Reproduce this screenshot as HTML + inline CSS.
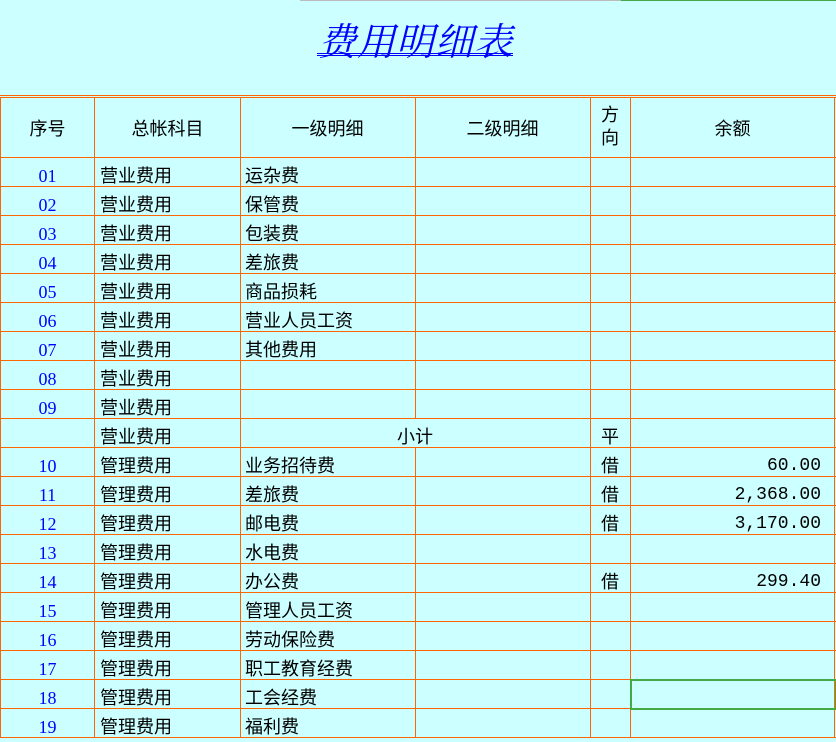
<!DOCTYPE html>
<html><head><meta charset="utf-8"><style>
body{margin:0;width:836px;height:738px;overflow:hidden;background:#ccffff;position:relative;font-family:"Liberation Sans","Noto Sans CJK SC",sans-serif;color:#000}
.t{position:absolute;left:318px;top:11px;font-size:38px;font-style:italic;color:#0000ff;white-space:nowrap;font-family:"Liberation Serif","Noto Serif CJK SC",serif;letter-spacing:1px}
.u{position:absolute;left:317px;width:196px;height:1px;background:#0000ff}
.h{position:absolute;background:#ff6600;height:1px;left:0;width:836px}
.v{position:absolute;background:#ff6600;width:1px}
.c{position:absolute;font-size:18px;line-height:29px;white-space:nowrap}
.n{color:#0000ff;font-family:"Liberation Serif",serif;text-align:center;width:95px;left:0}
.m{font-family:"Liberation Mono",monospace;text-align:right;right:15px}
</style></head><body>
<div style="position:absolute;left:300px;top:0;width:321px;height:1px;background:#bbb"></div>
<div style="position:absolute;left:621px;top:0;width:215px;height:1px;background:#44aa44"></div>
<div class="t">费用明细表</div>
<div class="u" style="top:53px"></div>
<div class="u" style="top:55px"></div>
<div class="h" style="top:95px"></div>
<div class="h" style="top:97px"></div>
<div id="g"></div>
<div style="position:absolute;left:630px;top:679px;width:203px;height:27px;border:2px solid #44aa44"></div>
<script>
var g=document.getElementById('g'),s='';
var xs=[0,94,240,415,590,630,834];
xs.forEach(function(x){s+='<div class="v" style="left:'+x+'px;top:97px;height:641px"></div>'});
for(var i=0;i<=20;i++){s+='<div class="h" style="top:'+(157+29*i)+'px"></div>'}
var hy=115;
s+='<div class="c" style="left:0;width:95px;text-align:center;top:'+hy+'px">序号</div>';
s+='<div class="c" style="left:95px;width:145px;text-align:center;top:'+hy+'px">总帐科目</div>';
s+='<div class="c" style="left:240px;width:175px;text-align:center;top:'+hy+'px">一级明细</div>';
s+='<div class="c" style="left:415px;width:175px;text-align:center;top:'+hy+'px">二级明细</div>';
s+='<div class="c" style="left:590px;width:40px;text-align:center;top:104px;line-height:23px">方<br>向</div>';
s+='<div class="c" style="left:630px;width:205px;text-align:center;top:'+hy+'px">余额</div>';
var rows=[['01','营业费用','运杂费'],['02','营业费用','保管费'],['03','营业费用','包装费'],['04','营业费用','差旅费'],['05','营业费用','商品损耗'],['06','营业费用','营业人员工资'],['07','营业费用','其他费用'],['08','营业费用',''],['09','营业费用',''],['','营业费用','小计','平'],['10','管理费用','业务招待费','借','60.00'],['11','管理费用','差旅费','借','2,368.00'],['12','管理费用','邮电费','借','3,170.00'],['13','管理费用','水电费'],['14','管理费用','办公费','借','299.40'],['15','管理费用','管理人员工资'],['16','管理费用','劳动保险费'],['17','管理费用','职工教育经费'],['18','管理费用','工会经费'],['19','管理费用','福利费']];
rows.forEach(function(r,i){var y=162+29*i;
s+='<div class="c n" style="top:'+y+'px">'+r[0]+'</div>';
s+='<div class="c" style="left:100px;top:'+y+'px">'+r[1]+'</div>';
if(r[2]=='小计'){s+='<div style="position:absolute;left:241px;top:'+(158+29*i)+'px;width:349px;height:28px;background:#ccffff"></div><div class="c" style="left:240px;width:350px;text-align:center;top:'+y+'px">小计</div>'}
else s+='<div class="c" style="left:245px;top:'+y+'px">'+r[2]+'</div>';
if(r[3])s+='<div class="c" style="left:590px;width:40px;text-align:center;top:'+y+'px">'+r[3]+'</div>';
if(r[4])s+='<div class="c m" style="top:'+y+'px">'+r[4]+'</div>';
});
g.innerHTML=s;
</script>
</body></html>
